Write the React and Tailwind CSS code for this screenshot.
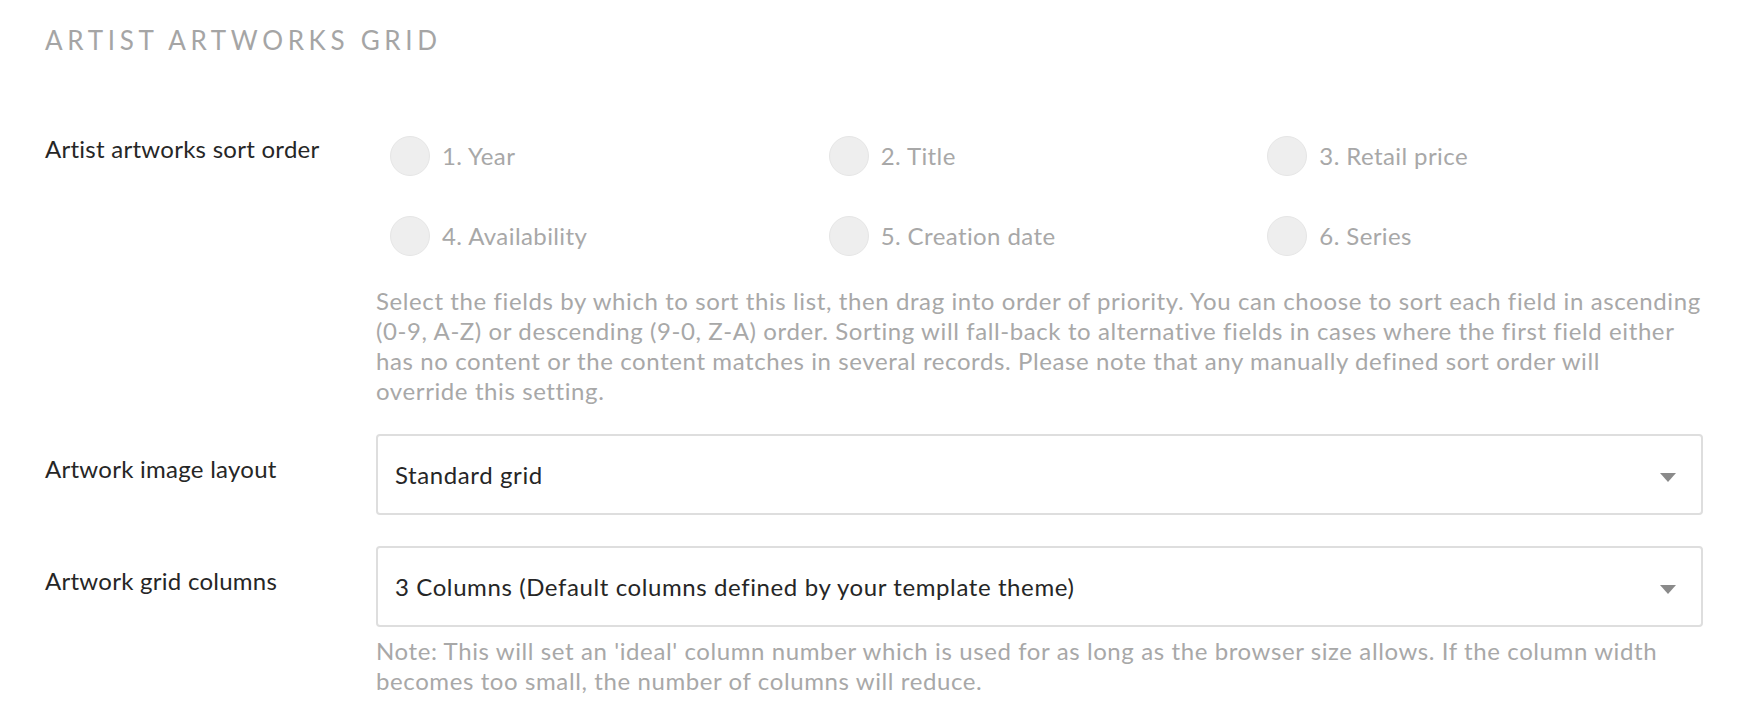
import React from 'react';

const font = { fontFamily: 'Lato, "Open Sans", sans-serif' };

const sortFields = [
    '1. Year',
    '2. Title',
    '3. Retail price',
    '4. Availability',
    '5. Creation date',
    '6. Series',
];

function Radio({ label }) {
    return (
        <label className="flex items-center pl-[14px] h-10 cursor-pointer">
            <span className="w-10 h-10 rounded-full bg-[#eeeeee] border border-[#e6e6e6] shrink-0"></span>
            <span className="ml-3 text-[24px] leading-[30px] tracking-[0.017em] text-[#a8a8a8]">{label}</span>
        </label>
    );
}

function Select({ value }) {
    return (
        <div className="relative h-[81px] border-2 border-[#dedede] rounded-[4px] bg-white flex items-center pl-[17px] pr-[60px]">
            <span className="text-[24px] leading-[30px] tracking-[0.025em] text-[#262626]">{value}</span>
            <svg className="absolute right-[25px] top-[37px]" width="16" height="9" viewBox="0 0 16 9">
                <path d="M0 0 L16 0 L8 9 Z" fill="#8a8a8a" />
            </svg>
        </div>
    );
}

export default function App() {
    return (
        <div className="bg-white min-h-[716px] pl-[45px] pr-[55px] pt-[25px]" style={font}>
            <h2 className="text-[26px] leading-[30px] tracking-[0.18em] text-[#a5a5a5] uppercase">
                Artist artworks grid
            </h2>

            {/* Sort order */}
            <div className="grid grid-cols-[331px_1fr] mt-[79px]">
                <div className="text-[24px] leading-[30px] tracking-[0.011em] text-[#262626]">Artist artworks sort order</div>
                <div>
                    <div className="grid grid-cols-3 w-[1316px] gap-y-10 mt-[2px]">
                        {sortFields.map(f => (
                            <Radio key={f} label={f} />
                        ))}
                    </div>
                    <p className="mt-[30px] text-[24px] leading-[30px] tracking-[0.025em] text-[#a8a8a8]">
                        Select the fields by which to sort this list, then drag into order of priority. You can choose to sort each field in ascending (0-9, A-Z) or descending (9-0, Z-A) order. Sorting will fall-back to alternative fields in cases where the first field either has no content or the content matches in several records. Please note that any manually defined sort order will<br />override this setting.
                    </p>
                </div>
            </div>

            {/* Image layout */}
            <div className="grid grid-cols-[331px_1fr] mt-[28px]">
                <div className="text-[24px] leading-[30px] tracking-[0.011em] text-[#262626] pt-[20px]">Artwork image layout</div>
                <Select value="Standard grid" />
            </div>

            {/* Grid columns */}
            <div className="grid grid-cols-[331px_1fr] mt-[31px]">
                <div className="text-[24px] leading-[30px] tracking-[0.011em] text-[#262626] pt-[20px]">Artwork grid columns</div>
                <div>
                    <Select value="3 Columns (Default columns defined by your template theme)" />
                    <p className="mt-[9px] text-[24px] leading-[30px] tracking-[0.025em] text-[#a8a8a8]">
                        Note: This will set an 'ideal' column number which is used for as long as the browser size allows. If the column width becomes too small, the number of columns will reduce.
                    </p>
                </div>
            </div>
        </div>
    );
}
